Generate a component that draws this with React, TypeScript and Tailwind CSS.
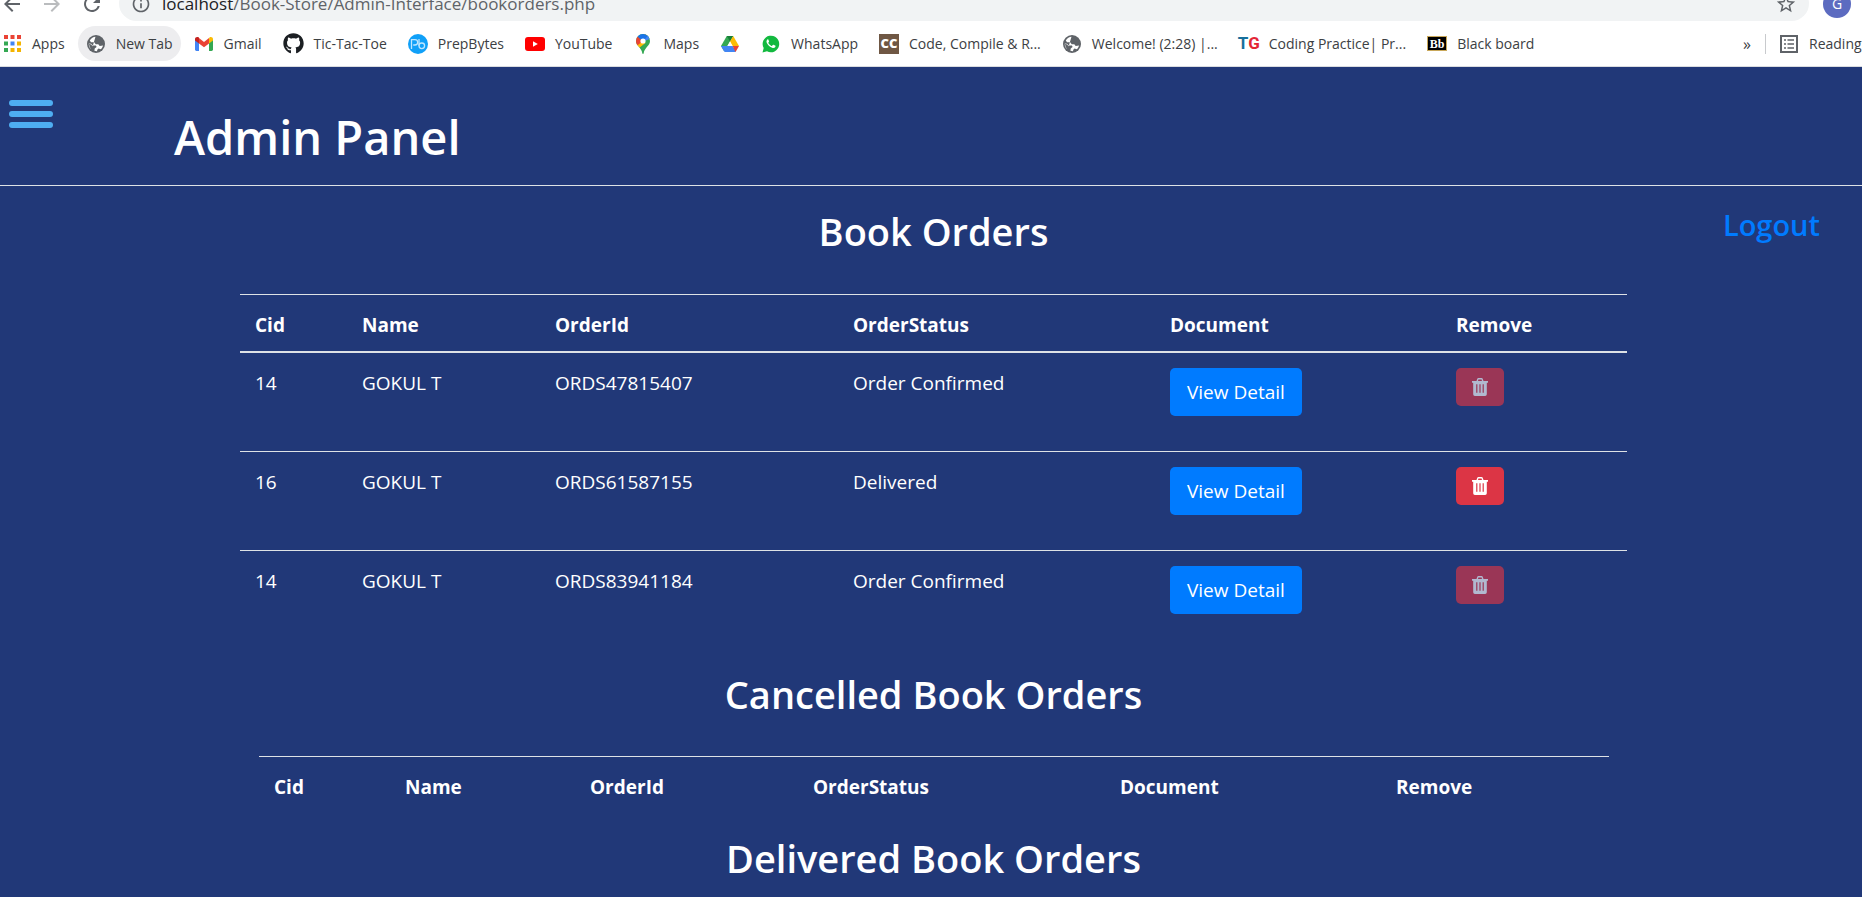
import type { ReactNode } from "react";
import { MdArrowBack, MdArrowForward, MdRefresh, MdInfoOutline, MdStarBorder } from "react-icons/md";
import { FaGithub } from "react-icons/fa";

function AppsIcon() {
  const colors = ["#ea4335", "#ea4335", "#ea4335", "#34a853", "#4285f4", "#f4b400", "#34a853", "#f4b400", "#f4b400"];
  return (
    <svg width="17" height="17" viewBox="0 0 17 17" aria-hidden="true">
      {colors.map((c, i) => (
        <rect key={i} x={(i % 3) * 6.5} y={Math.floor(i / 3) * 6.5} width="4" height="4" fill={c} />
      ))}
    </svg>
  );
}

function GlobeIcon() {
  return (
    <svg width="20" height="20" viewBox="0 0 20 20" aria-hidden="true" className="shrink-0">
      <circle cx="10" cy="10" r="9" fill="#5f6368" />
      <path
        d="M9.500 2.800C7.500 3 5 4.200 3.800 6.500L5 8.300h3.200l1.500 1.900h2.600l1.400 1.700 3.300-.4c-.3 1.500-1 2.800-2.200 3.800l-2.300-.7-1.200 1.200-.3 1.400c-1 0-1.800-.1-2.600-.4l.3-2.300 1.900-1.500-.7-1.500H6.800L5 9.700 2.800 9.400c-.2 2 .4 3.700 1.700 5.200l1.600-.4"
        fill="#fff"
      />
      <path d="M3 9.800l2 .8 2 2v2.600l-1.500.4A8 8 0 0 1 3 9.800z" fill="#5f6368" />
    </svg>
  );
}

function GmailIcon() {
  return (
    <svg width="20" height="20" viewBox="0 0 20 20" aria-hidden="true">
      <path d="M1 5v10.600a1.400 1.400 0 0 0 1.400 1.400H5V8.500z" fill="#4285f4" />
      <path d="M19 5v10.600a1.400 1.400 0 0 1-1.400 1.400H15V8.500z" fill="#34a853" />
      <path d="M15 4.600V9.500l4-3V5c0-1.800-2-2.700-3.400-1.700z" fill="#fbbc04" />
      <path d="M5 9.500V4l5 3.900L15 4v5.500L10 13.300z" fill="#ea4335" />
      <path d="M1 5v1.500l4 3V3.600l-.5-.3C3 2.300 1 3.200 1 5z" fill="#c5221f" />
    </svg>
  );
}

function PrepBytesIcon() {
  return (
    <svg width="20" height="20" viewBox="0 0 20 20" aria-hidden="true">
      <circle cx="10" cy="10" r="10" fill="#10a0f8" />
      <g fill="none" stroke="#bfe6ff" strokeWidth="1.300">
        <path d="M3.500 15V5.600H7a2.700 2.700 0 0 1 0 5.400H5.200" />
        <path d="M11 5v6.800" />
        <circle cx="13.800" cy="11.800" r="2.800" />
      </g>
    </svg>
  );
}

function YouTubeIcon() {
  return (
    <svg width="20" height="20" viewBox="0 0 20 20" aria-hidden="true">
      <rect x="0" y="3" width="20" height="14" rx="3" fill="#f00" />
      <path d="M8 7.200v5.600l4.800-2.800z" fill="#fff" />
    </svg>
  );
}

function MapsIcon() {
  return (
    <svg width="20" height="20" viewBox="0 0 20 20" aria-hidden="true">
      <clipPath id="pin">
        <path d="M10 0a7 7 0 0 0-7 7c0 5 5.600 6.500 6.300 12.300.1.900 1.300.9 1.400 0C11.400 13.500 17 12 17 7a7 7 0 0 0-7-7z" />
      </clipPath>
      <g clipPath="url(#pin)">
        <rect width="20" height="20" fill="#34a853" />
        <path d="M0 13.500L10 7l7-7h-5L0 13.500z M4 15.500L12.500 9 10 4 2 11z" fill="#fbbc04" />
        <path d="M10 7L4.500 2.500 0 6v6.500l3.500-.5z" fill="#ea4335" />
        <path d="M4.500 2.500L10 7.500l7-6L12-2H8z" fill="#1a73e8" />
        <path d="M10 7.500l4.800-5.700L19 8l-2-3z" fill="#4285f4" />
      </g>
      <circle cx="10" cy="7" r="2.600" fill="#fff" />
    </svg>
  );
}

function DriveIcon() {
  return (
    <svg width="20" height="20" viewBox="0 0 20 20" aria-hidden="true">
      <path d="M6.800 2h6.400L10 7.600 4.300 17.400 1 12z" fill="#34a853" />
      <path d="M6.800 2h6.400L10 7.600z" fill="#188038" />
      <path d="M13.200 2L19 12h-6.400L10 7.600z" fill="#fbbc04" />
      <path d="M7.400 12H1l3 5.200c.3.500.7.800 1.300.8h9.400c.6 0 1-.3 1.300-.8l-3.400-5.200z" fill="#4285f4" />
      <path d="M12.600 12H19l-3 5.200c-.2.300-.4.500-.7.600z" fill="#ea4335" />
      <path d="M10 7.600L7.400 12h5.200z" fill="#fff" />
    </svg>
  );
}

function WhatsAppIcon() {
  return (
    <svg width="20" height="20" viewBox="0 0 20 20" aria-hidden="true">
      <path d="M1.500 18.500l1.200-4.400A8.300 8.300 0 1 1 6 17.300z" fill="#12b93f" />
      <path
        d="M7 5.300c-.3 0-.6.100-.8.400-.9 1-.9 2.200-.2 3.500 1.200 2.200 2.800 3.700 5.100 4.600 1.400.5 2.600.2 3.200-.9.200-.4.300-.9.200-1.100-.6-.5-1.300-.8-2-1.100-.3-.1-.5 0-.7.200l-.7.900c-.2.200-.4.200-.6.100-1.400-.6-2.400-1.500-3.100-2.700-.1-.2-.1-.4 0-.6l.6-.8c.1-.2.100-.4 0-.6l-.7-1.600c-.1-.2-.2-.3-.3-.3z"
        fill="#fff"
      />
    </svg>
  );
}

function LetterIcon({ className, children }: { className: string; children: ReactNode }) {
  return (
    <span aria-hidden="true" className={`flex w-5 shrink-0 items-center justify-center ${className}`}>
      {children}
    </span>
  );
}

function ReadingIcon() {
  return (
    <svg width="18" height="18" viewBox="0 0 18 18" aria-hidden="true" className="shrink-0 text-[#5f6368]">
      <rect x="1" y="1" width="16" height="16" fill="none" stroke="currentColor" strokeWidth="2" />
      <path d="M4 5h2M4 9h2M4 13h2M7.500 5H14M7.500 9H14M7.500 13H14" stroke="currentColor" strokeWidth="1.600" />
    </svg>
  );
}

function TrashIcon() {
  return (
    <svg width="16" height="18" viewBox="0 0 16 18" aria-hidden="true">
      <path
        fill="currentColor"
        fillRule="evenodd"
        d="M4.500 3l.6-1.800C5.300.400 5.800 0 6.500 0h3c.7 0 1.200.4 1.400 1.200L11.500 3H16v1.800h-1.200V16c0 1.200-.7 2-1.700 2H2.900c-1 0-1.700-.8-1.700-2V4.800H0V3zm1.500 0h4l-.4-1.400H6.400zM4.200 6.200v8.600h1.200V6.200zm3.200 0v8.600h1.200V6.200zm3.200 0v8.600h1.200V6.200z"
      />
    </svg>
  );
}

const bookmarks: { label: string; icon: ReactNode }[] = [
  { label: "Gmail", icon: <GmailIcon /> },
  { label: "Tic-Tac-Toe", icon: <FaGithub size={21} className="shrink-0 text-[#1b1f23]" /> },
  { label: "PrepBytes", icon: <PrepBytesIcon /> },
  { label: "YouTube", icon: <YouTubeIcon /> },
  { label: "Maps", icon: <MapsIcon /> },
  { label: "", icon: <DriveIcon /> },
  { label: "WhatsApp", icon: <WhatsAppIcon /> },
  {
    label: "Code, Compile & R...",
    icon: <LetterIcon className="h-5 bg-[#6f5744] text-[13px] font-extrabold text-white">CC</LetterIcon>,
  },
  { label: "Welcome! (2:28) |...", icon: <GlobeIcon /> },
  {
    label: "Coding Practice| Pr...",
    icon: (
      <LetterIcon className="h-5 font-['Roboto'] text-[17px] font-bold">
        <span className="text-[#17709c]">T</span>
        <span className="text-[#e32636]">G</span>
      </LetterIcon>
    ),
  },
  {
    label: "Black board",
    icon: (
      <LetterIcon className="h-[15px] border border-[#c9a85a] bg-black font-['Liberation_Serif'] text-[12px] leading-none font-bold text-white">
        Bb
      </LetterIcon>
    ),
  },
];

function BrowserBar() {
  return (
    <div className="bg-white text-[14px] text-[#3c4043]">
      <div className="flex h-[21px] items-end overflow-hidden">
        <div className="flex h-[35px] w-full items-center pr-[11px]">
          <div className="flex w-[119px] shrink-0 items-center gap-4 text-[#5f6368]">
            <button aria-label="Back"><MdArrowBack size={24} /></button>
            <button aria-label="Forward" className="text-[#babcbe]"><MdArrowForward size={24} /></button>
            <button aria-label="Reload"><MdRefresh size={24} /></button>
          </div>
          <div className="flex h-full grow items-center gap-[11px] rounded-full bg-[#f1f3f4] px-3 text-[#5f6368]">
            <MdInfoOutline size={20} />
            <span className="grow text-[17px]">
              <span className="text-[#202124]">localhost</span>/Book-Store/Admin-Interface/bookorders.php
            </span>
            <button aria-label="Bookmark this tab"><MdStarBorder size={22} /></button>
          </div>
          <button className="ml-[14px] size-7 shrink-0 rounded-full bg-[#5c6bc0] text-[14px] text-white">G</button>
        </div>
      </div>
      <nav aria-label="Bookmarks" className="flex h-[46px] items-center overflow-hidden whitespace-nowrap border-b border-[#dadce0] pl-1">
        <a href="#apps" className="mr-[13px] flex items-center gap-[11px]"><AppsIcon />Apps</a>
        <a href="#newtab" className="mr-[13px] flex h-[35px] items-center gap-[10px] rounded-full bg-[#ededef] px-[8px]">
          <GlobeIcon />New Tab
        </a>
        <div className="flex grow items-center gap-[21px]">
          {bookmarks.map((b, i) => (
            <a key={i} href={`#bookmark-${i}`} aria-label={b.label || "Drive"} className="flex items-center gap-[10px]">
              {b.icon}
              {b.label && <span>{b.label}</span>}
            </a>
          ))}
        </div>
        <button aria-label="More bookmarks" className="text-[16px]">»</button>
        <span className="mx-[14px] h-5 w-px bg-[#c8cacd]" />
        <button className="flex w-[82px] shrink-0 items-center gap-[11px] overflow-hidden"><ReadingIcon />Reading</button>
      </nav>
    </div>
  );
}

const headings = ["Cid", "Name", "OrderId", "OrderStatus", "Document", "Remove"];

function HeadRow() {
  return (
    <tr>
      {headings.map((h) => (
        <th key={h} scope="col" className="px-[15px] pt-[15px] pb-[11px] text-left font-bold">{h}</th>
      ))}
    </tr>
  );
}

const orders = [
  { cid: 14, name: "GOKUL T", id: "ORDS47815407", status: "Order Confirmed", removable: false },
  { cid: 16, name: "GOKUL T", id: "ORDS61587155", status: "Delivered", removable: true },
  { cid: 14, name: "GOKUL T", id: "ORDS83941184", status: "Order Confirmed", removable: false },
];

const cell = "px-[15px] py-[15px]";

export default function App() {
  return (
    <div className="flex h-screen flex-col overflow-hidden font-['Open_Sans','Noto_Sans',sans-serif]">
      <BrowserBar />
      <div className="grow overflow-hidden bg-[#213878] text-white">
        <header className="flex items-start border-b border-[#dee2e6] pt-[33px] pb-[18px]">
          <button aria-label="Open menu" className="ml-[9px] flex w-[44px] flex-col gap-[5px]">
            <span className="h-[6px] rounded-full bg-[#4eaef2]" />
            <span className="h-[6px] rounded-full bg-[#4eaef2]" />
            <span className="h-[6px] rounded-full bg-[#4eaef2]" />
          </button>
          <h1 className="ml-[121px] pt-[7px] text-[47px] leading-[60px] font-semibold">Admin Panel</h1>
        </header>

        <main>
          <div className="grid grid-cols-[1fr_auto_1fr] items-start pt-[21px] pl-[5px]">
            <h2 className="col-start-2 text-[38px] leading-[48px] font-semibold">Book Orders</h2>
            <a href="#logout" className="mr-[42px] justify-self-end text-[29px] leading-[36px] font-semibold text-[#007bff]">
              Logout
            </a>
          </div>

          <section aria-label="Book orders" className="mt-[39px] pl-[5px]">
            <div className="px-[235px]">
              <table className="w-full table-fixed border-collapse text-[19px] leading-[30px]">
                <colgroup>
                  <col className="w-[107px]" />
                  <col className="w-[193px]" />
                  <col className="w-[298px]" />
                  <col className="w-[317px]" />
                  <col className="w-[286px]" />
                  <col className="w-[186px]" />
                </colgroup>
                <thead className="border-t border-b-2 border-t-[#dee2e6] border-b-[#dee2e6]">
                  <HeadRow />
                </thead>
                <tbody className="divide-y divide-[#dee2e6]">
                  {orders.map((o) => (
                    <tr key={o.id} className="h-[99px] align-top">
                      <td className={cell}>{o.cid}</td>
                      <td className={cell}>{o.name}</td>
                      <td className={cell}>{o.id}</td>
                      <td className={cell}>{o.status}</td>
                      <td className={cell}>
                        <button className="block h-12 rounded-[5px] bg-[#007bff] px-[17px]">View Detail</button>
                      </td>
                      <td className={cell}>
                        <button
                          aria-label="Remove order"
                          disabled={!o.removable}
                          className="flex h-[38px] w-12 items-center justify-center rounded-[5px] bg-[#dc3545] disabled:opacity-65"
                        >
                          <TrashIcon />
                        </button>
                      </td>
                    </tr>
                  ))}
                </tbody>
              </table>
            </div>
          </section>

          <section aria-label="Cancelled book orders" className="pl-[5px]">
            <h2 className="mt-[21px] text-center text-[38px] leading-[48px] font-semibold">Cancelled Book Orders</h2>
            <div className="mt-[38px] px-[254px]">
              <table className="w-full table-fixed border-collapse text-[19px] leading-[30px]">
                <colgroup>
                  <col className="w-[131px]" />
                  <col className="w-[185px]" />
                  <col className="w-[223px]" />
                  <col className="w-[307px]" />
                  <col className="w-[276px]" />
                  <col className="w-[228px]" />
                </colgroup>
                <thead className="border-t border-t-[#dee2e6]">
                  <HeadRow />
                </thead>
              </table>
            </div>
          </section>

          <section aria-label="Delivered book orders" className="pl-[5px]">
            <h2 className="mt-[21px] text-center text-[38px] leading-[48px] font-semibold">Delivered Book Orders</h2>
          </section>
        </main>
      </div>
    </div>
  );
}
